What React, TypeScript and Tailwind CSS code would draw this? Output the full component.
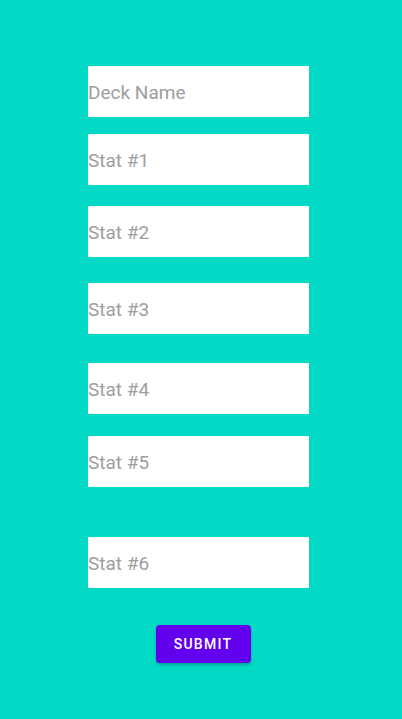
const fields = [
  { label: "Deck Name", mt: "mt-[66px]" },
  { label: "Stat #1", mt: "mt-[17px]" },
  { label: "Stat #2", mt: "mt-[21px]" },
  { label: "Stat #3", mt: "mt-[26px]" },
  { label: "Stat #4", mt: "mt-[29px]" },
  { label: "Stat #5", mt: "mt-[22px]" },
  { label: "Stat #6", mt: "mt-[50px]" },
];

export default function App() {
  return (
    <div className="h-[719px] w-[402px] bg-[#03dac5] font-['Roboto',sans-serif] flex flex-col items-center">
      <div className="flex flex-col w-[221px] ml-[-5px]">
        {fields.map((f) => (
          <input
            key={f.label}
            type="text"
            placeholder={f.label}
            className={`${f.mt} h-[51px] w-full bg-white px-0 pt-[1px] text-[19px] text-gray-800 placeholder:text-[#9e9e9e] outline-none`}
          />
        ))}
      </div>
      <button className="mt-[37px] h-[38px] w-[95px] ml-[4px] rounded bg-[#6200ee] text-white text-[14px] font-medium tracking-[1.25px] shadow-[0_2px_3px_rgba(0,0,0,0.25)]">
        SUBMIT
      </button>
    </div>
  );
}
